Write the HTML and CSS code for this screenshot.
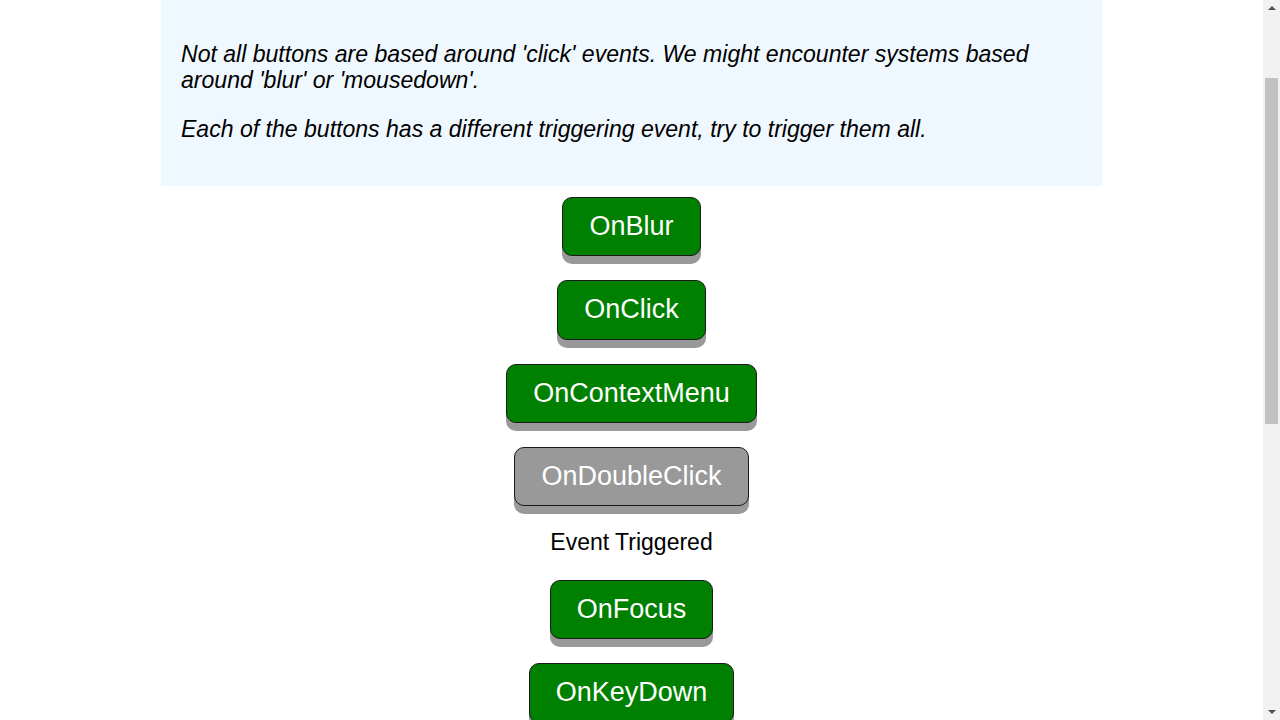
FILE: index.html
```html
<!DOCTYPE html>
<html lang="en">
<head>
<meta charset="utf-8">
<title>Button Events</title>
<link rel="stylesheet" href="styles.css">
</head>
<body>
<div class="viewport">
  <div class="page">
    <div class="intro">
      <p>Not all buttons are based around 'click' events. We might encounter systems based around 'blur' or 'mousedown'.</p>
      <p>Each of the buttons has a different triggering event, try to trigger them all.</p>
    </div>
    <div class="buttons">
      <button class="btn">OnBlur</button>
      <button class="btn">OnClick</button>
      <button class="btn">OnContextMenu</button>
      <button class="btn btn-done">OnDoubleClick</button>
      <div class="status">Event Triggered</div>
      <button class="btn">OnFocus</button>
      <button class="btn">OnKeyDown</button>
    </div>
  </div>
</div>
<div class="scrollbar">
  <div class="arrow arrow-up"></div>
  <div class="track"><div class="thumb"></div></div>
  <div class="arrow arrow-down"></div>
</div>
</body>
</html>
```
FILE: styles.css
```css
html, body {
  margin: 0;
  padding: 0;
  background: #ffffff;
  overflow: hidden;
  height: 720px;
}
body {
  font-family: "Liberation Sans", Arial, sans-serif;
  color: #000;
}
.viewport {
  margin-right: 17px;
}
.page {
  width: 941px;
  margin: 0 auto;
}
.intro {
  background: #f0f8ff;
  padding: 18px 20px 21px 20px;
  font-size: 23.05px;
  font-style: italic;
  line-height: 26px;
}
.intro p {
  margin: 23px 0;
}
.buttons {
  display: flex;
  flex-direction: column;
  align-items: center;
  gap: 24px;
  padding-top: 11px;
}
.btn {
  font-family: "Liberation Sans", Arial, sans-serif;
  font-size: 27px;
  line-height: 31.33px;
  color: #fff;
  background: #008000;
  border: 1px solid #1a1a1a;
  border-radius: 10px;
  padding: 13px 26px;
  box-shadow: 0 8px #999;
  cursor: pointer;
}
.btn-done {
  background: #999;
}
.status {
  font-size: 23px;
  line-height: 25.7px;
}
.scrollbar {
  position: fixed;
  top: 0;
  right: 0;
  width: 17px;
  height: 720px;
  background: #f1f1f1;
  display: flex;
  flex-direction: column;
}
.arrow {
  height: 16px;
  display: flex;
  align-items: center;
  justify-content: center;
}
.arrow::before {
  content: "";
  width: 0;
  height: 0;
  border-left: 4px solid transparent;
  border-right: 4px solid transparent;
}
.arrow-up::before {
  border-bottom: 4px solid #505050;
}
.arrow-down::before {
  border-top: 4px solid #505050;
}
.track {
  flex: 1;
  padding: 62px 2px 0 2px;
}
.thumb {
  height: 346px;
  background: #c1c1c1;
}
```
